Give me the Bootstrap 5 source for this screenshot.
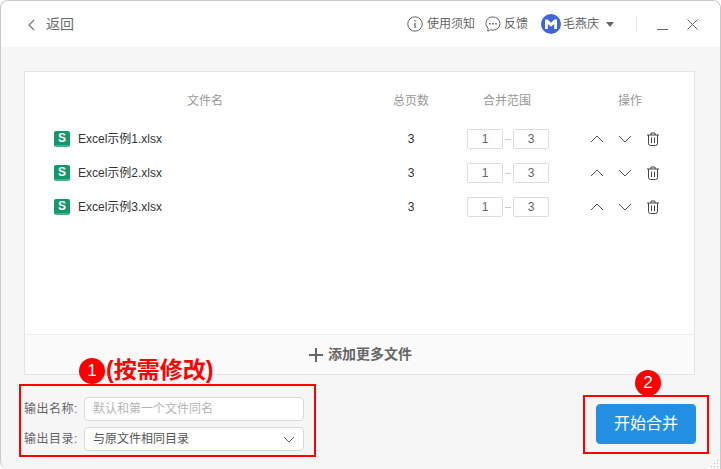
<!DOCTYPE html>
<html lang="zh"><head><meta charset="utf-8">
<link href="https://cdn.jsdelivr.net/npm/bootstrap@5.3.0/dist/css/bootstrap.min.css" rel="stylesheet">
<style>
html,body{margin:0;height:469px;overflow:hidden;background:#fff}
body{font-family:"Liberation Sans","Noto Sans CJK SC",sans-serif;font-size:12px;color:#333}
.app-win{position:relative;width:721px;height:469px;background:#f6f6f6;border:1px solid #c9c9c9;border-bottom:0;border-radius:8px 8px 0 8px;overflow:hidden;margin:0}
.app-top{height:46px;background:#fff;color:#666}
.back-link{font-size:14px;color:#6b6b6b;margin-left:26px;gap:10px;padding-top:1px}
.top-item{color:#666;font-size:12px}
.gap-a{gap:4px}
.gap-b{gap:3px;margin-left:10px}
.gap-c{gap:2px;margin-left:13px}
.caret-i{margin-left:5px}
.top-sep{width:1px;height:16px;background:#e2e2e2;margin-left:22px}
.min-i{margin-left:20px}
.close-i{margin:0 22px 0 19px}
.file-card{margin:24px 25px 0 23px;height:304px;background:#fff;border:1px solid #e5e5e5}
.file-list{height:262px;padding:17px 0 0 29px}
.g-row{display:grid;grid-template-columns:302px 110px 84px 145px;align-items:center;height:34px}
.g-head{height:24px;margin-bottom:9px;color:#999;text-align:center}
.g-head .rng-head{padding-right:2px}
.g-head .op-head{padding-left:15px}
.f-name{color:#333;gap:8px}
.xls{width:16px;height:16px;border-radius:2px;background:#12986a;color:#fff;font-size:12px;font-weight:700;text-align:center;border-bottom:2px solid #3cb78c;line-height:14px}
.pg{text-align:center;color:#333}
.rng{gap:2px;justify-content:center;color:#666}
.rng-box{width:36px;height:20px;border:1px solid #ddd;border-radius:2px;text-align:center;line-height:18px;font-size:12px;color:#666;background:#fff}
.rng-dash{width:6px;height:1px;background:#ccc}
.ops{padding-left:40px;gap:14px}
.ops svg{display:block}
.add-bar{height:40px;background:#fafafa;border-top:1px solid #eee;color:#666;font-weight:700;font-size:14px;gap:5px;padding-left:2px}
.bottom-zone{padding:22px 0 0 23px}
.lab{width:60px;color:#666;white-space:nowrap;letter-spacing:.5px}
.field-row{margin-bottom:6px}
.name-in{width:220px;height:24px;border:1px solid #d9d9d9;border-radius:4px;padding:0 8px;font-size:12px;background:#fff;color:#555;line-height:22px}
.name-in.ph{color:#b5b5b5}
.go-btn{width:100px;height:40px;background:#2490e4;border-color:#2490e4;color:#fff;font-size:16px;border-radius:4px;padding:0}
.go-btn:hover{background:#2490e4;border-color:#2490e4;color:#fff}
.go-wrap{position:absolute;left:595px;top:403px}
.red-box{position:absolute;border:2px solid #f00}
.box-a{left:18px;top:383px;width:297px;height:73px}
.box-b{left:582px;top:394px;width:126px;height:59px}
.red-num{position:absolute;width:26px;height:26px;border-radius:50%;background:#f00;color:#fff;text-align:center;font-size:17px;line-height:26px}
.num-a{left:78px;top:357px}
.num-b{left:634px;top:369px}
.note{position:absolute;left:105px;top:355px;color:#f00;font-size:23px;font-weight:700;line-height:28px;white-space:nowrap}
.grip{position:absolute;right:1px;bottom:1px}
</style></head><body>
<div class="app-win">
  <div class="app-top d-flex align-items-center">
    <div class="back-link d-flex align-items-center">
      <svg width="9" height="12" viewBox="0 0 9 12" fill="none" stroke="#777" stroke-width="1.2"><path d="M7 1 2 6l5 5"/></svg>
      <span>返回</span>
    </div>
    <div class="ms-auto d-flex align-items-center">
      <div class="top-item gap-a d-flex align-items-center">
        <svg width="16" height="16" viewBox="0 0 16 16" fill="none" stroke="#666"><circle cx="8" cy="8" r="7.2"/><path d="M8 7v5M8 4v1.5" stroke-width="1.3"/></svg><span>使用须知</span>
      </div>
      <div class="top-item gap-b d-flex align-items-center">
        <svg width="16" height="16" viewBox="0 0 16 16" fill="none" stroke="#666"><path d="M8 1a7 6.6 0 0 1 0 13.2c-1 0-2-.2-2.8-.5L2.800 15.300l.2-3A6.500 6.500 0 0 1 8 1z"/><circle cx="5" cy="7.800" r=".5" fill="#666"/><circle cx="8" cy="7.800" r=".5" fill="#666"/><circle cx="11" cy="7.800" r=".5" fill="#666"/></svg><span>反馈</span>
      </div>
      <div class="top-item gap-c d-flex align-items-center">
        <svg width="20" height="20" viewBox="0 0 20 20"><circle cx="10" cy="10" r="10" fill="#3f65d8"/><path d="M4 5.500h2.600L10 8.800l3.400-3.300H16v9.500h-2.800V10L10 12.800 6.800 10v5H4z" fill="#fff"/></svg><span>毛燕庆</span>
        <svg class="caret-i" width="8" height="5" viewBox="0 0 8 5"><path d="M0 0h8L4 5z" fill="#666"/></svg>
      </div>
      <div class="top-sep"></div>
      <svg class="min-i" width="11" height="11" viewBox="0 0 11 11"><path d="M0 10.500h11" stroke="#666"/></svg>
      <svg class="close-i" width="11" height="11" viewBox="0 0 11 11"><path d="M.5.500l10 10M10.500.500l-10 10" stroke="#666"/></svg>
    </div>
  </div>
  <div class="file-card">
    <div class="file-list">
      <div class="g-row g-head"><div>文件名</div><div>总页数</div><div class="rng-head">合并范围</div><div class="op-head">操作</div></div>
      <div class="g-row">
        <div class="f-name d-flex align-items-center"><span class="xls">S</span><span>Excel示例1.xlsx</span></div><div class="pg">3</div>
        <div class="rng d-flex align-items-center"><span class="rng-box">1</span><span class="rng-dash"></span><span class="rng-box">3</span></div>
        <div class="ops d-flex align-items-center">
          <svg width="14" height="14" viewBox="0 0 14 14" fill="none" stroke="#555"><path d="M1 10l6-6 6 6"/></svg>
          <svg width="14" height="14" viewBox="0 0 14 14" fill="none" stroke="#555"><path d="M1 4l6 6 6-6"/></svg>
          <svg width="14" height="14" viewBox="0 0 14 14" fill="none" stroke="#444"><path d="M1 3h12M5 3V1h4v2M2.500 3v8.500q0 2 2 2h5q2 0 2-2V3M5.500 5.500v5.500M8.500 5.500v5.500"/></svg>
        </div>
      </div>
      <div class="g-row">
        <div class="f-name d-flex align-items-center"><span class="xls">S</span><span>Excel示例2.xlsx</span></div><div class="pg">3</div>
        <div class="rng d-flex align-items-center"><span class="rng-box">1</span><span class="rng-dash"></span><span class="rng-box">3</span></div>
        <div class="ops d-flex align-items-center">
          <svg width="14" height="14" viewBox="0 0 14 14" fill="none" stroke="#555"><path d="M1 10l6-6 6 6"/></svg>
          <svg width="14" height="14" viewBox="0 0 14 14" fill="none" stroke="#555"><path d="M1 4l6 6 6-6"/></svg>
          <svg width="14" height="14" viewBox="0 0 14 14" fill="none" stroke="#444"><path d="M1 3h12M5 3V1h4v2M2.500 3v8.500q0 2 2 2h5q2 0 2-2V3M5.500 5.500v5.500M8.500 5.500v5.500"/></svg>
        </div>
      </div>
      <div class="g-row">
        <div class="f-name d-flex align-items-center"><span class="xls">S</span><span>Excel示例3.xlsx</span></div><div class="pg">3</div>
        <div class="rng d-flex align-items-center"><span class="rng-box">1</span><span class="rng-dash"></span><span class="rng-box">3</span></div>
        <div class="ops d-flex align-items-center">
          <svg width="14" height="14" viewBox="0 0 14 14" fill="none" stroke="#555"><path d="M1 10l6-6 6 6"/></svg>
          <svg width="14" height="14" viewBox="0 0 14 14" fill="none" stroke="#555"><path d="M1 4l6 6 6-6"/></svg>
          <svg width="14" height="14" viewBox="0 0 14 14" fill="none" stroke="#444"><path d="M1 3h12M5 3V1h4v2M2.500 3v8.500q0 2 2 2h5q2 0 2-2V3M5.500 5.500v5.500M8.500 5.500v5.500"/></svg>
        </div>
      </div>
    </div>
    <div class="add-bar d-flex align-items-center justify-content-center">
      <svg width="14" height="14" viewBox="0 0 14 14"><path d="M7 0v14M0 7h14" stroke="#666" stroke-width="2"/></svg><span>添加更多文件</span>
    </div>
  </div>
  <div class="bottom-zone">
    <div class="field-row d-flex align-items-center"><span class="lab">输出名称:</span><div class="name-in ph">默认和第一个文件同名</div></div>
    <div class="field-row d-flex align-items-center"><span class="lab">输出目录:</span><div class="name-in d-flex align-items-center justify-content-between"><span>与原文件相同目录</span><svg width="12" height="7" viewBox="0 0 12 7" fill="none" stroke="#666"><path d="M1 1l5 5 5-5"/></svg></div></div>
  </div>
  <div class="go-wrap"><button class="btn go-btn" type="button">开始合并</button></div>
  <div class="red-box box-a"></div>
  <div class="red-box box-b"></div>
  <div class="red-num num-a">1</div>
  <div class="note">(按需修改)</div>
  <div class="red-num num-b">2</div>
  <svg class="grip" width="8" height="8" viewBox="0 0 8 8" fill="#bbb"><rect x="6" y="0" width="1" height="1"/><rect x="3" y="3" width="1" height="1"/><rect x="6" y="3" width="1" height="1"/><rect x="0" y="6" width="1" height="1"/><rect x="3" y="6" width="1" height="1"/><rect x="6" y="6" width="1" height="1"/></svg>
</div>
</body></html>
